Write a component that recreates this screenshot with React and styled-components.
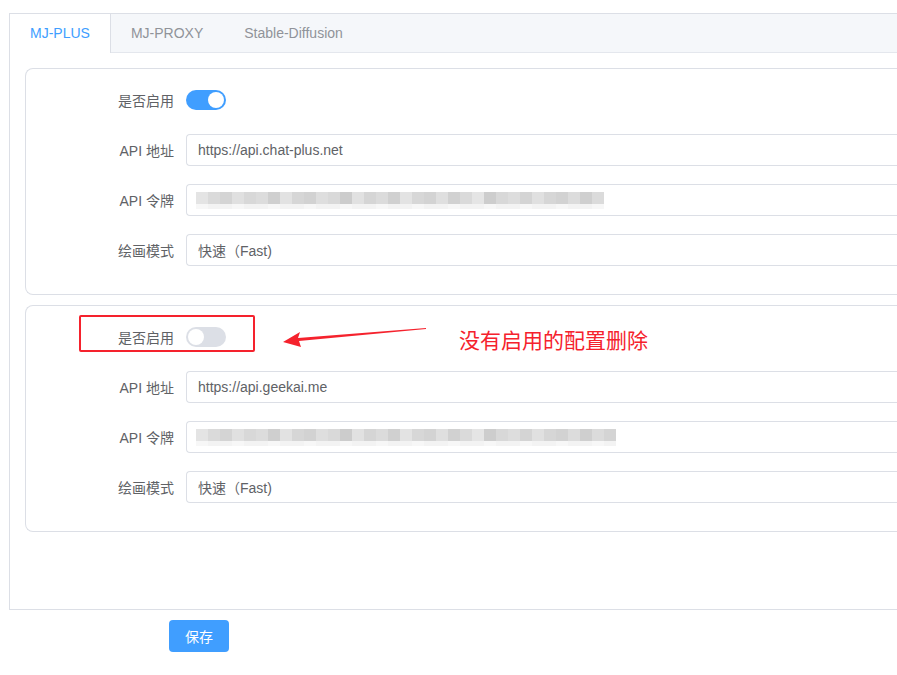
import React from 'react';
import styled, { createGlobalStyle } from 'styled-components';

const GlobalStyle = createGlobalStyle`
  html, body {
    margin: 0;
    padding: 0;
    background: #fff;
    overflow: hidden;
  }
  body {
    font-family: "Liberation Sans", "Noto Sans CJK SC", sans-serif;
    font-size: 14px;
    color: #606266;
  }
`

const Page = styled.div`
  position: relative;
  width: 1100px;
  padding: 13px 0 0 9px;
`

const TabsBox = styled.div`
  border: 1px solid #dcdfe6;
  border-right: none;
  background: #fff;
`

const TabHeader = styled.div`
  display: flex;
  height: 38px;
  background: #f5f7fa;
  border-bottom: 1px solid #e4e7ed;
`

const Tab = styled.div`
  height: ${p => p.active ? '39px' : '38px'};
  line-height: 38px;
  padding: 0 20px;
  box-sizing: border-box;
  font-size: 14px;
  color: ${p => p.active ? '#409eff' : '#909399'};
  background: ${p => p.active ? '#fff' : 'transparent'};
  border-right: 1px solid ${p => p.active ? '#dcdfe6' : 'transparent'};
`

const TabBody = styled.div`
  padding: 15px 0 77px 15px;
  display: flex;
  flex-direction: column;
  gap: 10px;
`

const Card = styled.div`
  border: 1px solid #dcdfe6;
  border-right: none;
  border-radius: 8px 0 0 8px;
  padding: 15px 0 10px 32px;
`

const Row = styled.div`
  display: flex;
  align-items: center;
  height: 32px;
  margin-bottom: 18px;
`

const Label = styled.label`
  width: 128px;
  padding-right: 12px;
  box-sizing: border-box;
  text-align: right;
  font-size: 14px;
  color: #606266;
`

const Input = styled.div`
  flex: 1;
  height: 32px;
  box-sizing: border-box;
  border: 1px solid #dcdfe6;
  border-right: none;
  border-radius: 4px 0 0 4px;
  padding: 0 11px;
  display: flex;
  align-items: center;
  color: #606266;
  font-size: 14px;
`

const Switch = styled.div`
  position: relative;
  width: 40px;
  height: 20px;
  border-radius: 10px;
  background: ${p => p.on ? '#409eff' : '#dcdfe6'};

  &::after {
    content: '';
    position: absolute;
    top: 2px;
    left: ${p => p.on ? '22px' : '2px'};
    width: 16px;
    height: 16px;
    border-radius: 50%;
    background: #fff;
  }
`

const Mosaic = styled.div`
  display: flex;
  flex-direction: column;
  margin-left: -2px;
  filter: blur(0.3px);
`

const MosaicRow = styled.div`
  display: flex;
  height: ${p => p.h}px;
`

const Block = styled.span`
  width: 12px;
  height: 100%;
`

const Footer = styled.div`
  padding: 10px 0 0 160px;
`

const SaveButton = styled.button`
  width: 60px;
  height: 32px;
  border: none;
  border-radius: 4px;
  background: #409eff;
  color: #fff;
  font-family: "Liberation Sans", "Noto Sans CJK SC", sans-serif;
  font-size: 14px;
`

const Highlight = styled.div`
  position: absolute;
  left: 79px;
  top: 315px;
  width: 172px;
  height: 33px;
  border: 2px solid #f5222d;
  border-radius: 2px;
`

const Arrow = styled.svg`
  position: absolute;
  left: 280px;
  top: 322px;
`

const Note = styled.div`
  position: absolute;
  left: 459px;
  top: 324px;
  font-size: 21px;
  color: #f5222d;
  font-family: "Noto Sans CJK SC", sans-serif;
`

const shades1 = ['#e4e4e4', '#dadada', '#d4d4d4', '#e0e0e0', '#d8d8d8', '#dcdcdc', '#cfcfcf', '#e2e2e2', '#d6d6d6', '#d2d2d2', '#dedede', '#d9d9d9', '#cccccc', '#e1e1e1', '#d5d5d5', '#dbdbdb', '#d0d0d0', '#e3e3e3', '#d7d7d7', '#d3d3d3', '#dfdfdf', '#d1d1d1', '#dadada', '#e5e5e5', '#cdcdcd', '#d8d8d8', '#dddddd', '#d4d4d4', '#e0e0e0', '#d6d6d6', '#d2d2d2', '#dcdcdc', '#cfcfcf', '#dbdbdb', '#d4d4d4']
const shades2 = shades1.map(() => '#f3f3f3')

function Token({ count }) {
  return (
    <Mosaic>
      <MosaicRow h={12}>
        {shades1.slice(0, count).map((c, i) => <Block key={i} style={{ background: c }} />)}
      </MosaicRow>
      <MosaicRow h={5}>
        {shades2.slice(0, count).map((c, i) => <Block key={i} style={{ background: i % 3 ? c : '#f7f7f7' }} />)}
      </MosaicRow>
    </Mosaic>
  )
}

const configs = [
  { on: true, url: 'https://api.chat-plus.net', blocks: 34 },
  { on: false, url: 'https://api.geekai.me', blocks: 35 },
]

export default function App() {
  return (
    <Page>
      <GlobalStyle />
      <TabsBox>
        <TabHeader>
          <Tab active>MJ-PLUS</Tab>
          <Tab>MJ-PROXY</Tab>
          <Tab>Stable-Diffusion</Tab>
        </TabHeader>
        <TabBody>
          {configs.map((c, idx) => (
            <Card key={idx}>
              <Row>
                <Label>是否启用</Label>
                <Switch on={c.on} />
              </Row>
              <Row>
                <Label>API 地址</Label>
                <Input>{c.url}</Input>
              </Row>
              <Row>
                <Label>API 令牌</Label>
                <Input><Token count={c.blocks} /></Input>
              </Row>
              <Row>
                <Label>绘画模式</Label>
                <Input>快速（Fast)</Input>
              </Row>
            </Card>
          ))}
        </TabBody>
      </TabsBox>
      <Footer>
        <SaveButton>保存</SaveButton>
      </Footer>

      <Highlight />
      <Arrow width="150" height="26" viewBox="0 0 150 26">
        <polygon points="3,20 20,10 18,16 146,6 146,7 19,19 21,25" fill="#f5222d" />
      </Arrow>
      <Note>没有启用的配置删除</Note>
    </Page>
  )
}
